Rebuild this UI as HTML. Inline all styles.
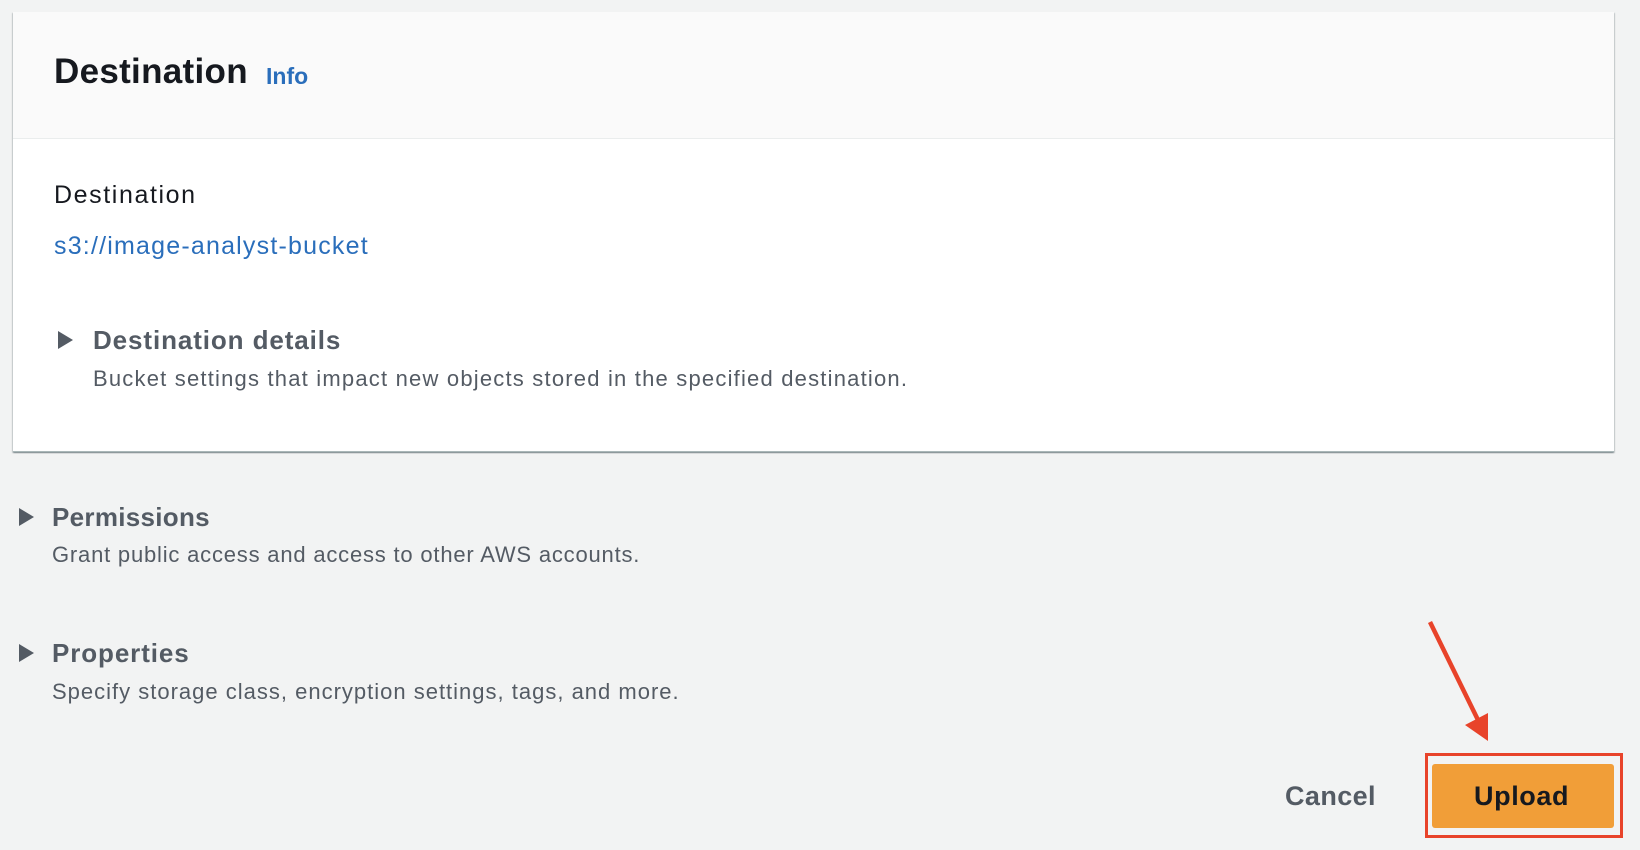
<!DOCTYPE html>
<html><head><meta charset="utf-8"><style>
html,body{margin:0;padding:0}
body{width:1640px;height:850px;background:#f2f3f3;position:relative;overflow:hidden;font-family:"Liberation Sans",Arial,sans-serif}
.card{position:absolute;left:13px;top:12px;width:1601px;height:439px;background:#fff;box-shadow:0 1px 1px 0 rgba(0,28,36,.3),1px 1px 1px 0 rgba(0,28,36,.15),-1px 1px 1px 0 rgba(0,28,36,.15);border-bottom:1px solid #aab7b8}
.hdr{position:absolute;left:0;top:0;right:0;height:126px;background:#fafafa;border-bottom:1px solid #eaeded}
.t{position:absolute;white-space:nowrap}
.tri{position:absolute;width:0;height:0;border-top:9px solid transparent;border-bottom:9px solid transparent;border-left:15px solid #545b64}
</style></head><body>
<div class="card"><div class="hdr"></div></div>
<div class="t" style="left:54px;top:52px;font-size:35px;font-weight:bold;color:#16191f;letter-spacing:.3px">Destination</div>
<div class="t" style="left:266px;top:63px;font-size:23px;font-weight:bold;color:#2a6ebb">Info</div>
<div class="t" style="left:54px;top:181px;font-size:25px;color:#16191f;letter-spacing:1.6px">Destination</div>
<div class="t" style="left:54px;top:232px;font-size:25px;color:#2a6ebb;letter-spacing:1.2px">s3://image-analyst-bucket</div>
<div class="tri" style="left:58px;top:331px"></div>
<div class="t" style="left:93px;top:325px;font-size:26px;font-weight:bold;color:#545b64;letter-spacing:.9px">Destination details</div>
<div class="t" style="left:93px;top:366px;font-size:22px;color:#545b64;letter-spacing:1.2px">Bucket settings that impact new objects stored in the specified destination.</div>
<div class="tri" style="left:19px;top:508px"></div>
<div class="t" style="left:52px;top:502px;font-size:26px;font-weight:bold;color:#545b64;letter-spacing:.3px">Permissions</div>
<div class="t" style="left:52px;top:542px;font-size:22px;color:#545b64;letter-spacing:.8px">Grant public access and access to other AWS accounts.</div>
<div class="tri" style="left:19px;top:644px"></div>
<div class="t" style="left:52px;top:638px;font-size:26px;font-weight:bold;color:#545b64;letter-spacing:.9px">Properties</div>
<div class="t" style="left:52px;top:679px;font-size:22px;color:#545b64;letter-spacing:1px">Specify storage class, encryption settings, tags, and more.</div>
<div class="t" style="left:1285px;top:781px;font-size:27px;font-weight:bold;color:#545b64;letter-spacing:.4px">Cancel</div>
<div style="position:absolute;left:1425px;top:753px;width:192px;height:79px;border:3px solid #e8432a"></div>
<div style="position:absolute;left:1432px;top:764px;width:182px;height:64px;background:#f19e38;border-radius:3px"></div>
<div class="t" style="left:1474px;top:781px;font-size:27px;font-weight:bold;color:#16191f;letter-spacing:.6px">Upload</div>
<svg style="position:absolute;left:0;top:0" width="1640" height="850"><line x1="1430" y1="622" x2="1478" y2="720" stroke="#e8432a" stroke-width="4.5"/><polygon points="1488,741 1465,725 1488,713" fill="#e8432a"/></svg>
</body></html>
